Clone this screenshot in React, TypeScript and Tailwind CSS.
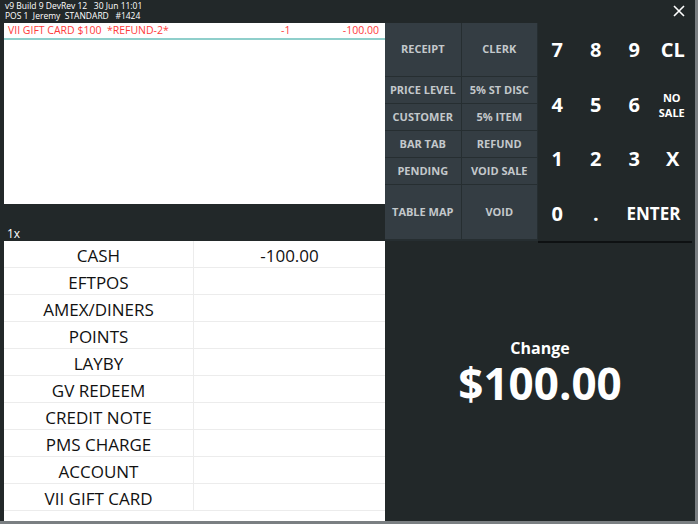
const font = { fontFamily: '"Open Sans", "Noto Sans", sans-serif' };

const funcRows: { labels: string[]; h: string }[] = [
  { labels: ["RECEIPT", "CLERK"], h: "h-[54px]" },
  { labels: ["PRICE LEVEL", "5% ST DISC"], h: "h-[27px]" },
  { labels: ["CUSTOMER", "5% ITEM"], h: "h-[27px]" },
  { labels: ["BAR TAB", "REFUND"], h: "h-[27px]" },
  { labels: ["PENDING", "VOID SALE"], h: "h-[27px]" },
  { labels: ["TABLE MAP", "VOID"], h: "h-[55px]" },
];

const tenders = [
  ["CASH", "-100.00"],
  ["EFTPOS", ""],
  ["AMEX/DINERS", ""],
  ["POINTS", ""],
  ["LAYBY", ""],
  ["GV REDEEM", ""],
  ["CREDIT NOTE", ""],
  ["PMS CHARGE", ""],
  ["ACCOUNT", ""],
  ["VII GIFT CARD", ""],
];

export default function App() {
  return (
    <div
      className="w-[698px] h-[524px] bg-[#222829] text-white flex flex-col overflow-hidden border-r-[3px] border-b-[3px] border-[#7a7f82]"
      style={font}
    >
      {/* header */}
      <div className="h-[23px] flex justify-between pl-[5px] pr-[8px]">
        <div className="text-[8.5px] leading-[10px] pt-[1px]">
          <div>v9 Build 9 DevRev 12&nbsp;&nbsp; 30 Jun 11:01</div>
          <div>POS 1&nbsp; Jeremy&nbsp; STANDARD&nbsp;&nbsp; #1424</div>
        </div>
        <svg width="12" height="12" viewBox="0 0 12 12" className="mt-[5px] mr-[2px]">
          <path d="M1 1 L11 11 M11 1 L1 11" stroke="white" strokeWidth="1.6" />
        </svg>
      </div>

      <div className="flex flex-1">
        {/* left column */}
        <div className="w-[385px] pl-[4px] flex flex-col">
          <div className="h-[181px] bg-white">
            <div className="h-[17px] border-b-2 border-[#8fcfcb] flex items-center text-[#ff3b3b] text-[10.5px] px-[4px]">
              <span className="flex-1">VII GIFT CARD $100&nbsp; *REFUND-2*</span>
              <span className="w-[40px]">-1</span>
              <span className="w-[60px] text-right pr-[2px]">-100.00</span>
            </div>
          </div>
          <div className="h-[37px] flex items-end">
            <span className="text-[12px] leading-[14px] pl-[3px]">1x</span>
          </div>
          <div className="flex-1 bg-white text-[#111] text-[17px]">
            {tenders.map(([name, amt]) => (
              <div key={name} className="h-[27px] flex border-b border-[#ececec] pt-[3px]">
                <div className="w-[190px] border-r border-[#ececec] flex items-center justify-center -mt-[3px] pt-[3px]">
                  {name}
                </div>
                <div className="flex-1 flex items-center justify-center">{amt}</div>
              </div>
            ))}
          </div>
        </div>

        {/* right column */}
        <div className="flex-1 flex flex-col">
          <div className="flex h-[218px]">
            <div className="w-[153px] flex flex-col bg-[#262e31]">
              {funcRows.map((r) => (
                <div key={r.labels[0]} className={`flex ${r.h}`}>
                  {r.labels.map((l) => (
                    <div
                      key={l}
                      className="flex-1 bg-[#343d43] border-r border-b border-[#262e31] flex items-center justify-center text-[11px] font-bold text-[#c3c8cb]"
                    >
                      {l}
                    </div>
                  ))}
                </div>
              ))}
            </div>
            <div className="flex-1 grid grid-cols-4 grid-rows-4 font-bold text-[20px] pr-[3px]">
              {["7", "8", "9", "CL", "4", "5", "6", "NO SALE", "1", "2", "3", "X", "0", "."].map((k) => (
                <div
                  key={k}
                  className={
                    k === "NO SALE"
                      ? "flex items-center justify-center text-center text-[11px] leading-[15px] px-[7px] pr-[9px]"
                      : "flex items-center justify-center"
                  }
                >
                  {k}
                </div>
              ))}
              <div className="col-span-2 flex items-center justify-center text-[17px]">ENTER</div>
            </div>
          </div>
          <div className="h-[2px] flex">
            <div className="w-[153px]" />
            <div className="flex-1 mr-[3px] bg-[#0e1112]" />
          </div>
          <div className="flex-1 flex flex-col items-center pt-[96px] font-bold">
            <div className="text-[16px] leading-[18px]">Change</div>
            <div className="text-[44px] leading-[44px] mt-[4px]">$100.00</div>
          </div>
        </div>
      </div>
    </div>
  );
}
